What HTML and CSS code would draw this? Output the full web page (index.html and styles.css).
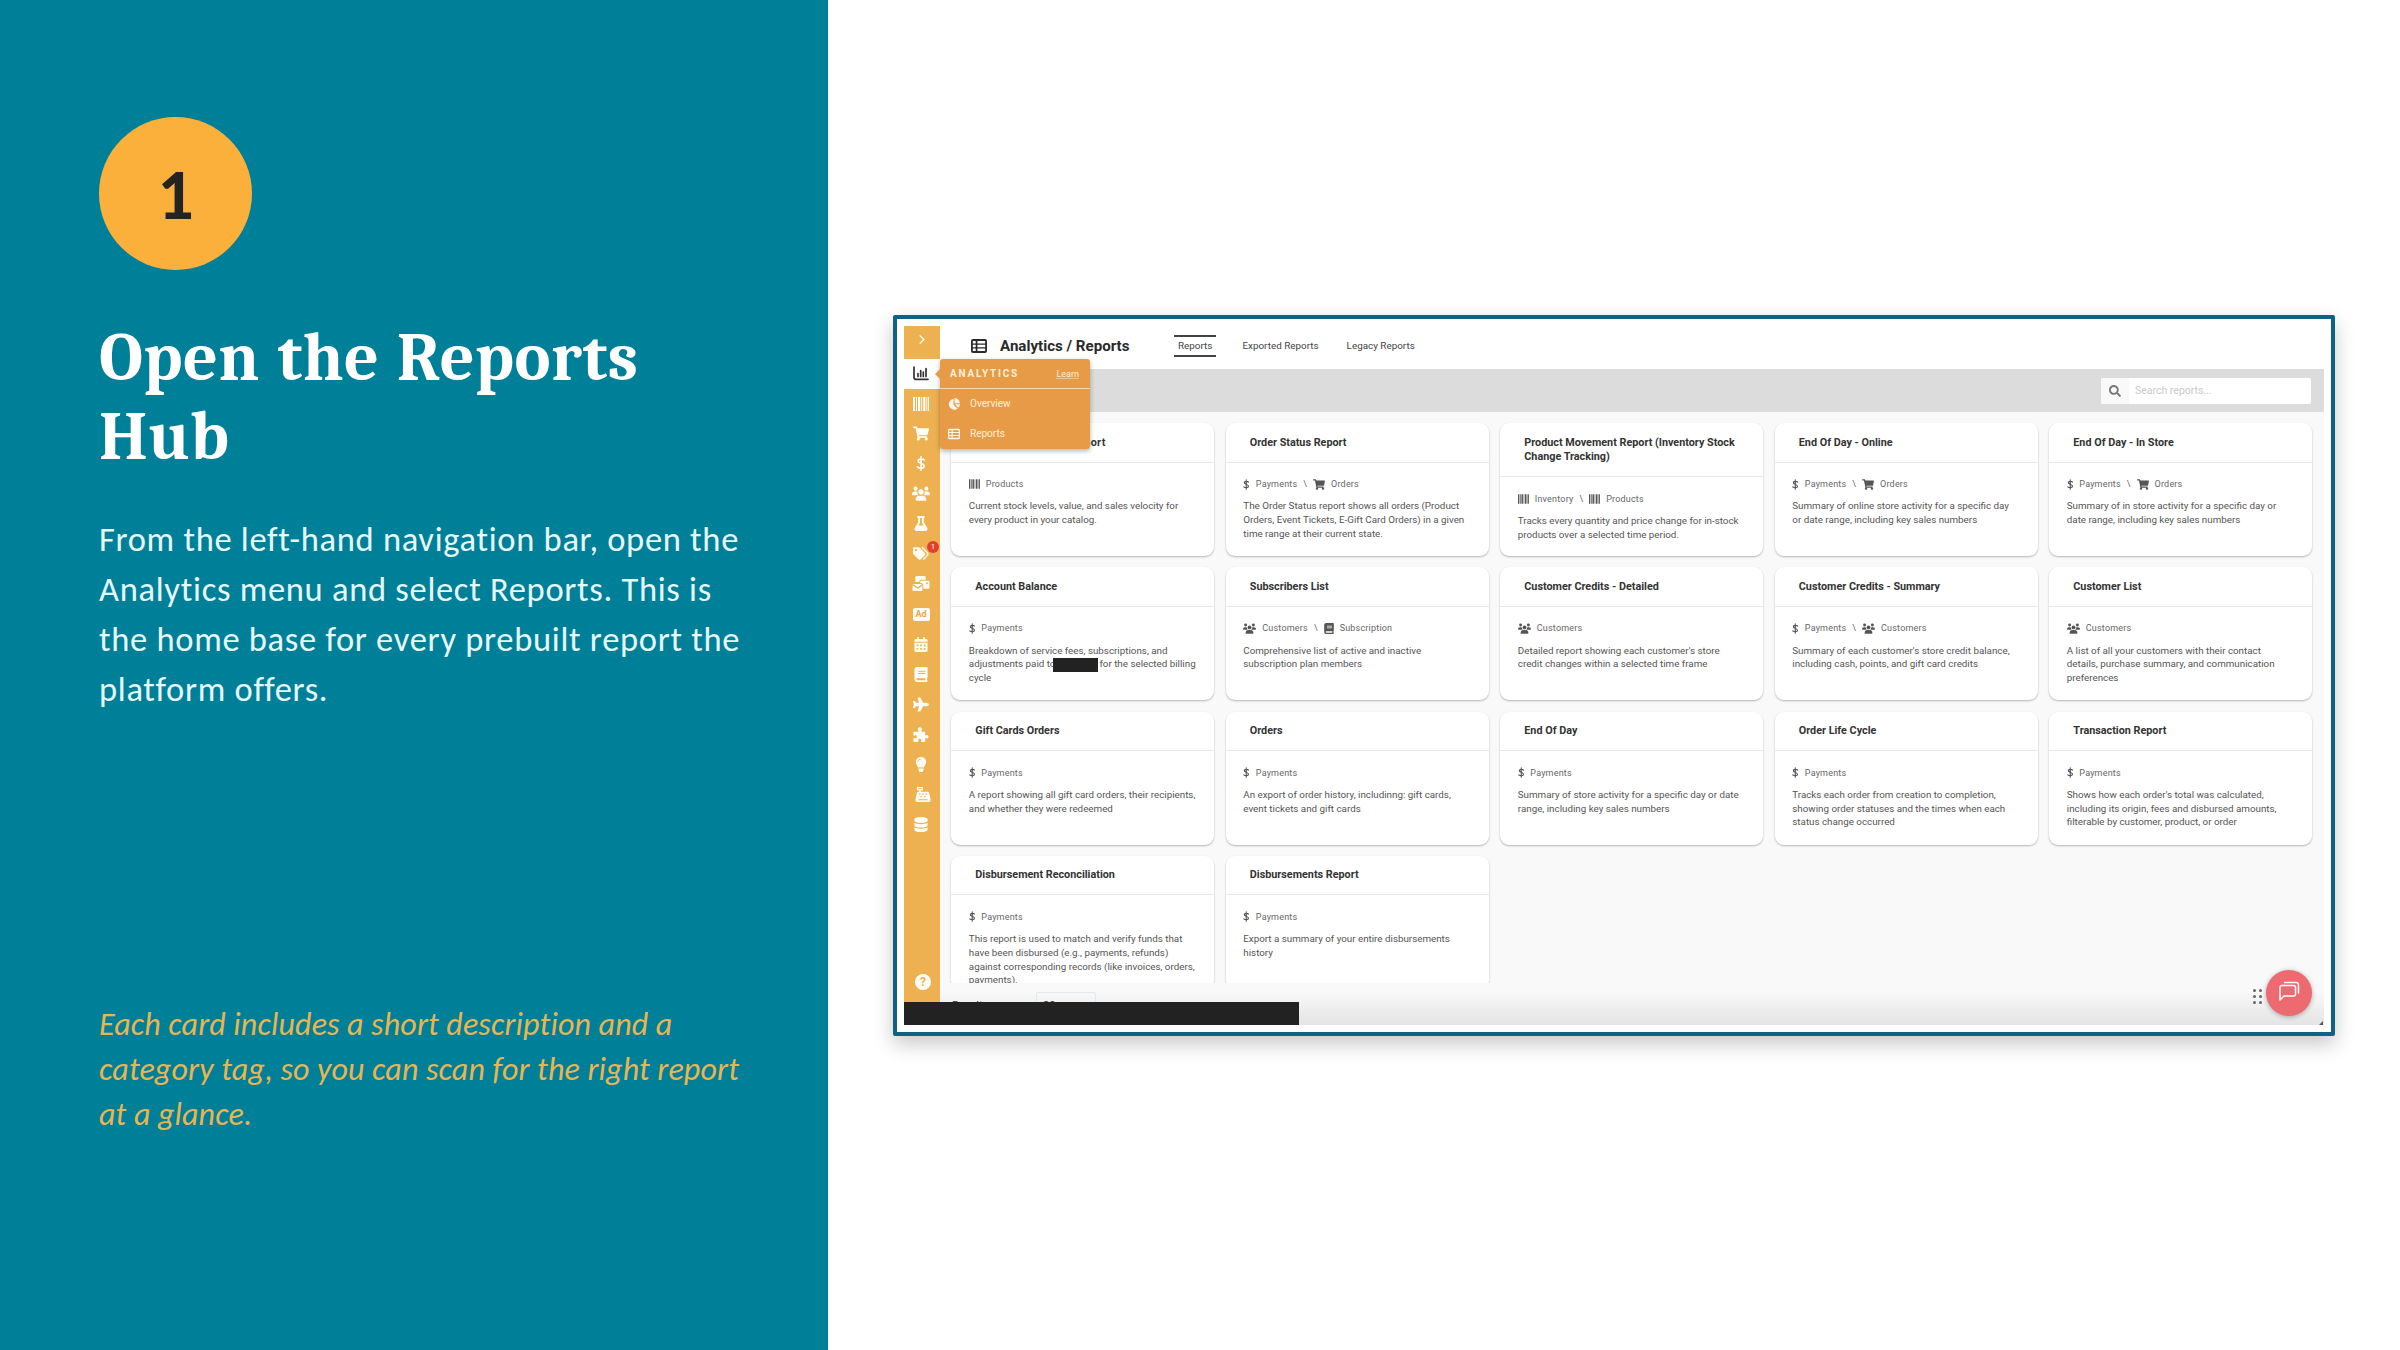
FILE: index.html
```html
<!DOCTYPE html>
<html lang="en">
<head>
  <meta charset="UTF-8" />
  <title>Open the Reports Hub</title>
  <link rel="stylesheet" href="styles.css">
</head>
<body>
  <!-- Icon sprite -->
  <svg class="sprite" xmlns="http://www.w3.org/2000/svg">
    <symbol id="i-table" viewBox="0 0 16 14"><path fill-rule="evenodd" d="M2 0h12a2 2 0 0 1 2 2v10a2 2 0 0 1-2 2H2a2 2 0 0 1-2-2V2a2 2 0 0 1 2-2zM1.8 2v2.4h2.9V2zM6.4 2v2.4h7.8V2zM1.8 5.8v2.4h2.9V5.8zM6.4 5.8v2.4h7.8V5.8zM1.8 9.6V12h2.9V9.6zM6.4 9.6V12h7.8V9.6z"/></symbol>
    <symbol id="i-chart" viewBox="0 0 16 14"><path d="M1 .5v10.300a2 2 0 0 0 2 2h12M5 10V7M7.700 10V4M10.300 10V5.500M13 10V2" fill="none" stroke="currentColor" stroke-width="1.700" stroke-linecap="round"/></symbol>
    <symbol id="i-barcode" viewBox="0 0 16 14"><path d="M0 0h2v14H0zM3 0h1v14H3zM5 0h2.200v14H5zM8.200 0h1v14h-1zM10.200 0h2.200v14h-2.200zM13.200 0h.7v14h-.7zM14.700 0H16v14h-1.300z"/></symbol>
    <symbol id="i-cart" viewBox="0 0 576 512"><path d="M528.12 301.319l47.273-208C578.806 78.301 567.391 64 551.99 64H159.208l-9.166-44.81C147.758 8.021 137.93 0 126.529 0H24C10.745 0 0 10.745 0 24v16c0 13.255 10.745 24 24 24h69.883l70.248 343.435C147.325 417.1 136 435.222 136 456c0 30.928 25.072 56 56 56s56-25.072 56-56c0-15.674-6.447-29.835-16.824-40h209.647C430.447 426.165 424 440.326 424 456c0 30.928 25.072 56 56 56s56-25.072 56-56c0-22.172-12.888-41.332-31.579-50.405l5.517-24.276c3.413-15.018-8.002-29.319-23.403-29.319H218.117l-6.545-32h293.145c11.206 0 20.92-7.754 23.403-18.681z"/></symbol>
    <symbol id="i-dollar" viewBox="0 0 10 16"><path d="M5 .8v14.400M8.600 4.300C7.500 3 2 2.300 2 5.300 2 8.600 8.400 7.200 8.400 10.600c0 3.200-5.500 2.800-7.200 1" fill="none" stroke="currentColor" stroke-width="1.700" stroke-linecap="round"/></symbol>
    <symbol id="i-users" viewBox="0 0 20 16"><circle cx="4" cy="2.600" r="2.300"/><circle cx="16" cy="2.600" r="2.300"/><circle cx="10" cy="6.300" r="2.900"/><path d="M0 9.200C0 7 1.200 5.900 3 5.900h2.300c.7 0 .8.600.8 1.300 0 1.200.4 2 1.100 2.700H.6C.2 9.900 0 9.600 0 9.200zM20 9.200c0-2.200-1.200-3.300-3-3.300h-2.300c-.7 0-.8.600-.8 1.300 0 1.200-.4 2-1.100 2.700h6.600c.4 0 .6-.3.600-.7zM4 15.200c0-3 1.500-4.800 4-4.800h4c2.500 0 4 1.800 4 4.800 0 .5-.3.800-.7.800H4.700c-.4 0-.7-.3-.7-.8z"/></symbol>
    <symbol id="i-flask" viewBox="0 0 448 512"><path d="M437.2 403.5L320 215V64h8c13.300 0 24-10.700 24-24V24c0-13.300-10.700-24-24-24H120c-13.300 0-24 10.700-24 24v16c0 13.300 10.700 24 24 24h8v151L10.800 403.500C-18.500 450.600 15.300 512 70.900 512h306.200c55.700 0 89.400-61.500 60.100-108.500zM137.900 320l48.200-77.600c3.700-5.200 5.800-11.600 5.800-18.400V64h64v160c0 6.900 2.200 13.200 5.800 18.400l48.200 77.600h-172z"/></symbol>
    <symbol id="i-tags" viewBox="0 0 18 15"><path fill-rule="evenodd" d="M0 1.500V7c0 .6.200 1 .6 1.400l5.600 5.600c.8.800 2 .8 2.700 0l4.400-4.500c.8-.8.800-2 0-2.700L7.600 1C7.200.6 6.700.4 6.200.4H1.300C.5.400 0 .8 0 1.500zm3.300 3.400a1.300 1.300 0 1 1 0-2.600 1.300 1.300 0 0 1 0 2.600z"/><path d="M10.500.8l5.600 5.800c.9.900.9 2 0 3L12 13.900" fill="none" stroke="currentColor" stroke-width="1.500" stroke-linecap="round"/></symbol>
    <symbol id="i-mail" viewBox="0 0 18 16"><path d="M3 1.200C3 .5 3.500 0 4.200 0h8.600c.7 0 1.200.5 1.200 1.200V4H9.500C8 4 7 5 7 6.500H3z"/><path fill-rule="evenodd" d="M9.200 5H17c.6 0 1 .4 1 1v6.500c0 .6-.4 1-1 1h-5.500V10c0-1.500-.9-2.500-2.400-2.500H8.200V6c0-.6.4-1 1-1zm5.300 2v1.800h1.800V7z"/><path d="M0 8.600h10.500L5.800 12 0 8.600zM0 10.100l5.300 3.200c.3.200.7.200 1 0l4.200-3.200v5c0 .6-.4.900-.9.900H.9c-.5 0-.9-.3-.9-.9z"/></symbol>
    <symbol id="i-calendar" viewBox="0 0 14 16"><path fill-rule="evenodd" d="M3 0h1.600v2h4.800V0H11v2h1.500c.8 0 1.500.7 1.500 1.500V5H0V3.500C0 2.700.7 2 1.500 2H3zM0 6h14v8.500c0 .8-.7 1.500-1.500 1.500h-11C.7 16 0 15.300 0 14.500zM2.300 8v1.800h1.800V8zM6.100 8v1.800h1.800V8zM9.900 8v1.800h1.800V8zM2.300 11.800v1.800h1.800v-1.800zM6.100 11.800v1.800h1.800v-1.800zM9.900 11.800v1.800h1.800v-1.800z"/></symbol>
    <symbol id="i-book" viewBox="0 0 14 16"><path fill-rule="evenodd" d="M3 0h10c.6 0 1 .4 1 1v10c0 .4-.2.700-.5.900v2c.3.100.5.400.5.700v.4c0 .6-.4 1-1 1H3c-1.700 0-3-1.300-3-3V3c0-1.700 1.300-3 3-3zm1 4v1h7.500V4zM4 6.500v1h7.500v-1zM3 12c-1.300 0-1.300 2 0 2h8.800v-2z"/></symbol>
    <symbol id="i-plane" viewBox="0 0 576 512"><path d="M480 192H365.71L260.61 8.06A16.014 16.014 0 0 0 246.71 0h-65.5c-10.63 0-18.3 10.17-15.38 20.39L214.86 192H112l-43.2-57.6c-3.02-4.03-7.77-6.4-12.8-6.4H16.01C5.6 128-2.04 137.78.49 147.88L32 256 .49 364.12C-2.04 374.22 5.6 384 16.01 384H56c5.04 0 9.78-2.37 12.8-6.4L112 320h102.86l-49.03 171.6c-2.92 10.22 4.75 20.4 15.38 20.4h65.5c5.74 0 11.04-3.08 13.89-8.06L365.71 320H480c35.35 0 96-28.65 96-64s-60.65-64-96-64z"/></symbol>
    <symbol id="i-puzzle" viewBox="0 0 16 16"><path d="M0 5h4.800c.9 0 .6-.8.3-1.300C4 2 5 .2 6.800.2S9.600 2 8.600 3.700C8.200 4.400 8.200 5 9 5h3.500v3.300c0 .9.700 1 1.300.5 1-.7 2.200 0 2.200 1.600s-1.200 2.300-2.200 1.600c-.6-.5-1.300-.4-1.300.5V16H8.700c-.8 0-.9-.7-.5-1.300.7-1.100 0-2.200-1.500-2.200s-2.200 1.100-1.500 2.200c.4.600.3 1.300-.5 1.300H0v-3.800c0-.9.700-.9 1.300-.5 1.200.7 2.300.1 2.300-1.300S2.500 8.500 1.300 9.200C.7 9.600 0 9.600 0 8.700z"/></symbol>
    <symbol id="i-bulb" viewBox="0 0 12 16"><path fill-rule="evenodd" d="M6 0c3.200 0 5.500 2.400 5.500 5.400 0 2.400-1.700 3.800-2.500 5.900H3C2.200 9.200.5 7.800.5 5.400.5 2.400 2.800 0 6 0zM3 5.300c0-1.500 1.200-2.600 2.800-2.700v-.8C3.700 1.900 2.200 3.300 2.200 5.300zM3.200 12.300h5.600v1.400L7.700 16H4.300l-1.100-2.300z"/></symbol>
    <symbol id="i-register" viewBox="0 0 16 16"><path fill-rule="evenodd" d="M1.500 0H8v3.500H5.700V5H13c.8 0 1.400.5 1.500 1.300l1.500 6.200v2c0 .9-.6 1.500-1.500 1.500h-13C.6 16 0 15.400 0 14.500v-2l1.500-6.200C1.700 5.500 2.200 5 3 5h.8V3.500H1.500zm1.300 1.200v1h4v-1zM3.800 7v1.300h1.500V7zM7.200 7v1.300h1.500V7zM10.600 7v1.300h1.500V7zM5.400 9.500v1.300h1.500V9.500zM9 9.500v1.300h1.500V9.500zM3 13v1.200h10V13z"/></symbol>
    <symbol id="i-db" viewBox="0 0 14 16"><path d="M0 2.500C0 1.100 3 0 7 0s7 1.100 7 2.500V4c0 1.300-3 2.400-7 2.400S0 5.300 0 4zM0 6.200C1.600 7.300 4.300 7.700 7 7.700s5.400-.4 7-1.500v2.500c0 1.400-3 2.500-7 2.500S0 10.100 0 8.700zM0 11c1.600 1.100 4.300 1.500 7 1.500s5.400-.4 7-1.500v2.500C14 14.900 11 16 7 16s-7-1.100-7-2.500z"/></symbol>
    <symbol id="i-pie" viewBox="0 0 16 16"><path d="M7.400 1v8l5.500 5.300A7.400 7.400 0 1 1 7.400 1zM8.800 0a7.200 7.200 0 0 1 7 7h-7zM9.300 8.400H16a7 7 0 0 1-2.300 4.600z"/></symbol>
    <symbol id="i-search" viewBox="0 0 512 512"><path d="M505 442.7L405.3 343c-4.5-4.5-10.6-7-17-7H372c27.6-35.3 44-79.7 44-128C416 93.1 322.9 0 208 0S0 93.1 0 208s93.1 208 208 208c48.3 0 92.7-16.4 128-44v16.3c0 6.4 2.5 12.5 7 17l99.7 99.7c9.4 9.4 24.6 9.4 33.9 0l28.3-28.3c9.4-9.4 9.4-24.6.1-34zM208 336c-70.7 0-128-57.2-128-128 0-70.7 57.2-128 128-128 70.7 0 128 57.2 128 128 0 70.7-57.2 128-128 128z"/></symbol>
    <symbol id="i-chat" viewBox="0 0 22 22"><path d="M2 19V6.500a2 2 0 0 1 2-2h11.500a2 2 0 0 1 2 2V13a2 2 0 0 1-2 2H6zM6.500 1.500H18a2.500 2.500 0 0 1 2.500 2.500v8" fill="none" stroke="currentColor" stroke-width="1.500" stroke-linecap="round" stroke-linejoin="round"/></symbol>
  </svg>

  <div class="slide">
    <!-- Left panel: step description -->
    <div class="panel">
      <div class="step">1</div>
      <h1>Open the Reports<br>Hub</h1>
      <p class="lead">From the left-hand navigation bar, open the<br>Analytics menu and select Reports. This is<br>the home base for every prebuilt report the<br>platform offers.</p>
      <p class="note">Each card includes a short description and a<br>category tag, so you can scan for the right report<br>at a glance.</p>
    </div>

    <!-- Right side: app window -->
    <div class="stage">
      <div class="frame">
        <div class="app">
          <nav class="sidebar">
            <div class="toggle"><svg viewBox="0 0 8 12"><path d="M1.500 1.500L6 6l-4.500 4.500" fill="none" stroke="currentColor" stroke-width="1.500"/></svg></div>
            <div class="item active"><svg><use href="#i-chart"/></svg></div>
            <div class="item"><svg class="barcode"><use href="#i-barcode"/></svg></div>
            <div class="item"><svg><use href="#i-cart"/></svg></div>
            <div class="item"><svg><use href="#i-dollar"/></svg></div>
            <div class="item"><svg class="wide"><use href="#i-users"/></svg></div>
            <div class="item"><svg><use href="#i-flask"/></svg></div>
            <div class="item"><svg><use href="#i-tags"/></svg><span class="badge">1</span></div>
            <div class="item"><svg class="wide"><use href="#i-mail"/></svg></div>
            <div class="item"><span class="ad">Ad</span></div>
            <div class="item"><svg><use href="#i-calendar"/></svg></div>
            <div class="item"><svg><use href="#i-book"/></svg></div>
            <div class="item"><svg><use href="#i-plane"/></svg></div>
            <div class="item"><svg><use href="#i-puzzle"/></svg></div>
            <div class="item"><svg><use href="#i-bulb"/></svg></div>
            <div class="item shift"><svg><use href="#i-register"/></svg></div>
            <div class="item"><svg><use href="#i-db"/></svg></div>
            <div class="help">?</div>
          </nav>

          <div class="main">
            <header class="topbar">
              <svg class="title-icon"><use href="#i-table"/></svg>
              <div class="title">Analytics / Reports</div>
              <div class="tabs">
                <a class="tab current">Reports</a>
                <a class="tab">Exported Reports</a>
                <a class="tab">Legacy Reports</a>
              </div>
            </header>
            <div class="filter">
              <div class="search">
                <div class="search-icon"><svg><use href="#i-search"/></svg></div>
                <div class="search-text">Search reports...</div>
              </div>
            </div>

            <div class="cards">
              <div class="card">
                <h3 class="spaced">Product Inventory Report</h3>
                <div class="tags"><svg class="t-bar"><use href="#i-barcode"/></svg><span>Products</span></div>
                <p>Current stock levels, value, and sales velocity for<br>every product in your catalog.</p>
              </div>
              <div class="card">
                <h3>Order Status Report</h3>
                <div class="tags"><svg class="t-usd"><use href="#i-dollar"/></svg><span>Payments</span><i>\</i><svg class="t-cart"><use href="#i-cart"/></svg><span>Orders</span></div>
                <p>The Order Status report shows all orders (Product<br>Orders, Event Tickets, E-Gift Card Orders) in a given<br>time range at their current state.</p>
              </div>
              <div class="card">
                <h3>Product Movement Report (Inventory Stock Change Tracking)</h3>
                <div class="tags"><svg class="t-bar"><use href="#i-barcode"/></svg><span>Inventory</span><i>\</i><svg class="t-bar"><use href="#i-barcode"/></svg><span>Products</span></div>
                <p>Tracks every quantity and price change for in-stock<br>products over a selected time period.</p>
              </div>
              <div class="card">
                <h3>End Of Day - Online</h3>
                <div class="tags"><svg class="t-usd"><use href="#i-dollar"/></svg><span>Payments</span><i>\</i><svg class="t-cart"><use href="#i-cart"/></svg><span>Orders</span></div>
                <p>Summary of online store activity for a specific day<br>or date range, including key sales numbers</p>
              </div>
              <div class="card">
                <h3>End Of Day - In Store</h3>
                <div class="tags"><svg class="t-usd"><use href="#i-dollar"/></svg><span>Payments</span><i>\</i><svg class="t-cart"><use href="#i-cart"/></svg><span>Orders</span></div>
                <p>Summary of in store activity for a specific day or<br>date range, including key sales numbers</p>
              </div>

              <div class="card">
                <h3>Account Balance</h3>
                <div class="tags"><svg class="t-usd"><use href="#i-dollar"/></svg><span>Payments</span></div>
                <p>Breakdown of service fees, subscriptions, and<br>adjustments paid to<span class="redact"></span>for the selected billing<br>cycle</p>
              </div>
              <div class="card">
                <h3>Subscribers List</h3>
                <div class="tags"><svg class="t-usr"><use href="#i-users"/></svg><span>Customers</span><i>\</i><svg class="t-book"><use href="#i-book"/></svg><span>Subscription</span></div>
                <p>Comprehensive list of active and inactive<br>subscription plan members</p>
              </div>
              <div class="card">
                <h3>Customer Credits - Detailed</h3>
                <div class="tags"><svg class="t-usr"><use href="#i-users"/></svg><span>Customers</span></div>
                <p>Detailed report showing each customer's store<br>credit changes within a selected time frame</p>
              </div>
              <div class="card">
                <h3>Customer Credits - Summary</h3>
                <div class="tags"><svg class="t-usd"><use href="#i-dollar"/></svg><span>Payments</span><i>\</i><svg class="t-usr"><use href="#i-users"/></svg><span>Customers</span></div>
                <p>Summary of each customer's store credit balance,<br>including cash, points, and gift card credits</p>
              </div>
              <div class="card">
                <h3>Customer List</h3>
                <div class="tags"><svg class="t-usr"><use href="#i-users"/></svg><span>Customers</span></div>
                <p>A list of all your customers with their contact<br>details, purchase summary, and communication<br>preferences</p>
              </div>

              <div class="card">
                <h3>Gift Cards Orders</h3>
                <div class="tags"><svg class="t-usd"><use href="#i-dollar"/></svg><span>Payments</span></div>
                <p>A report showing all gift card orders, their recipients,<br>and whether they were redeemed</p>
              </div>
              <div class="card">
                <h3>Orders</h3>
                <div class="tags"><svg class="t-usd"><use href="#i-dollar"/></svg><span>Payments</span></div>
                <p>An export of order history, includinng: gift cards,<br>event tickets and gift cards</p>
              </div>
              <div class="card">
                <h3>End Of Day</h3>
                <div class="tags"><svg class="t-usd"><use href="#i-dollar"/></svg><span>Payments</span></div>
                <p>Summary of store activity for a specific day or date<br>range, including key sales numbers</p>
              </div>
              <div class="card">
                <h3>Order Life Cycle</h3>
                <div class="tags"><svg class="t-usd"><use href="#i-dollar"/></svg><span>Payments</span></div>
                <p>Tracks each order from creation to completion,<br>showing order statuses and the times when each<br>status change occurred</p>
              </div>
              <div class="card">
                <h3>Transaction Report</h3>
                <div class="tags"><svg class="t-usd"><use href="#i-dollar"/></svg><span>Payments</span></div>
                <p>Shows how each order's total was calculated,<br>including its origin, fees and disbursed amounts,<br>filterable by customer, product, or order</p>
              </div>

              <div class="card">
                <h3>Disbursement Reconciliation</h3>
                <div class="tags"><svg class="t-usd"><use href="#i-dollar"/></svg><span>Payments</span></div>
                <p>This report is used to match and verify funds that<br>have been disbursed (e.g., payments, refunds)<br>against corresponding records (like invoices, orders,<br>payments).</p>
              </div>
              <div class="card">
                <h3>Disbursements Report</h3>
                <div class="tags"><svg class="t-usd"><use href="#i-dollar"/></svg><span>Payments</span></div>
                <p>Export a summary of your entire disbursements<br>history</p>
              </div>
            </div>

            <footer class="pager">
              <span>Results per page</span>
              <span class="select">20</span>
            </footer>
          </div>

          <!-- Analytics flyout menu -->
          <div class="flyout">
            <div class="flyout-head"><b>ANALYTICS</b><a>Learn</a></div>
            <div class="flyout-row"><svg><use href="#i-pie"/></svg><span>Overview</span></div>
            <div class="flyout-row"><svg><use href="#i-table"/></svg><span>Reports</span></div>
          </div>

          <div class="blackbar"></div>
          <div class="drag"><i></i><i></i><i></i><i></i><i></i><i></i></div>
          <div class="chat"><svg><use href="#i-chat"/></svg></div>
          <div class="corner"></div>
        </div>
      </div>
    </div>
  </div>
</body>
</html>
```
FILE: styles.css
```css
* { box-sizing: border-box; }
body {
  margin: 0;
  width: 2400px;
  height: 1350px;
  overflow: hidden;
  background: #fff;
  font-family: Roboto, "Liberation Sans", sans-serif;
}
svg { fill: currentColor; display: block; flex-shrink: 0; }
.sprite { position: absolute; width: 0; height: 0; }
.slide {
  display: flex;
  height: 1350px;
}

/* left panel */
.panel {
  width: 828px;
  background: #007f99;
  padding: 117px 0 0 99px;
  font-family: Carlito, Lato, sans-serif;
  white-space: nowrap;
}
.step {
  width: 153px;
  height: 153px;
  border-radius: 50%;
  background: #fbb03b;
  color: #232323;
  font-size: 72px;
  font-weight: bold;
  line-height: 155px;
  text-align: center;
}
h1 {
  margin: 49px 0 0;
  font-family: Caladea, "Noto Serif", "Liberation Serif", serif;
  font-size: 68px;
  line-height: 79px;
  font-weight: bold;
  letter-spacing: 0.500px;
  word-spacing: 2px;
  color: #fff;
}
.lead {
  margin: 38px 0 0;
  font-size: 34.500px;
  line-height: 49.900px;
  letter-spacing: 0.700px;
  color: #e6f8fa;
}
.note {
  margin: 287px 0 0;
  font-size: 32px;
  line-height: 45.300px;
  letter-spacing: 0.160px;
  font-style: italic;
  color: #e9b551;
}

/* framed app window */
.stage {
  flex: 1;
  padding: 315px 0 0 65px;
}
.frame {
  width: 1442px;
  height: 721px;
  border: 4px solid #0f6282;
  border-radius: 2px;
  padding: 7px;
  background: #fff;
  box-shadow: 0 8px 20px rgba(0,0,0,0.22);
}
.app {
  position: relative;
  display: flex;
  width: 1420px;
  height: 699px;
  overflow: hidden;
}
.sidebar {
  display: flex;
  flex-direction: column;
  align-items: stretch;
  width: 36px;
  background: #edb152;
  color: #fffdf5;
}
.toggle {
  display: flex;
  align-items: center;
  justify-content: center;
  height: 32.500px;
  padding-bottom: 5px;
}
.toggle svg { width: 8px; height: 11px; }
.item {
  position: relative;
  display: flex;
  align-items: center;
  justify-content: center;
  height: 30.070px;
  padding: 0 2px 0 0;
}
.item svg { width: 16px; height: 15px; }
.item svg.wide { width: 18px; height: 15px; }
.item svg.barcode { height: 14px; }
.item.shift { padding: 0; left: 1px; }
.item.active { background: #fff; color: #333; }
.badge {
  position: absolute;
  left: 23px;
  top: 2px;
  width: 12px;
  height: 12px;
  border-radius: 50%;
  background: #e2402c;
  color: #fff;
  font-size: 7px;
  line-height: 12px;
  text-align: center;
}
.ad {
  width: 17px;
  height: 13px;
  border-radius: 2px;
  background: #fffdf5;
  color: #e2a94f;
  font-size: 9px;
  line-height: 13px;
  font-weight: bold;
  text-align: center;
}
.help {
  margin: 134px 0 0 11px;
  width: 16px;
  height: 16px;
  border-radius: 50%;
  background: #fffdf5;
  color: #edb152;
  font-size: 12px;
  line-height: 16px;
  font-weight: bold;
  text-align: center;
}

.main {
  width: 1384px;
  display: flex;
  flex-direction: column;
  background: #f9f9f9;
}
.topbar {
  display: flex;
  align-items: center;
  height: 43px;
  padding: 0 0 3px 31px;
  background: #fff;
  color: #2a2a2a;
}
.title-icon { width: 16px; height: 14px; }
.title {
  width: 174px;
  margin-left: 13px;
  font-size: 15.100px;
  font-weight: bold;
}
.tabs { display: flex; gap: 24px; }
.tab {
  font-size: 9.900px;
  line-height: 18px;
  padding: 2px 2px;
  color: #444;
}
.tab.current {
  padding: 0 4px;
  border-top: 2px solid #444;
  border-bottom: 2px solid #444;
}
.filter {
  display: flex;
  justify-content: flex-end;
  align-items: center;
  height: 43px;
  padding-right: 13px;
  background: #dcdcdc;
}
.search {
  display: flex;
  width: 210px;
  height: 26px;
  border-radius: 2px;
  background: #fff;
  overflow: hidden;
}
.search-icon {
  display: flex;
  align-items: center;
  justify-content: center;
  width: 28px;
  background: #f9f9f9;
  color: #777;
}
.search-icon svg { width: 12px; height: 12px; }
.search-text {
  padding-left: 6px;
  font-size: 10.500px;
  line-height: 26px;
  color: #c9c9c9;
}

/* report cards */
.cards {
  display: grid;
  grid-template-columns: repeat(5, 263px);
  grid-auto-rows: 133px;
  gap: 11.300px 11.500px;
  height: 571px;
  padding: 11px 0 0 11.300px;
  overflow: hidden;
}
.card {
  border-radius: 9px;
  background: #fff;
  box-shadow: 0 1px 2px rgba(0,0,0,0.28);
}
.card h3 {
  margin: 0;
  padding: 12.500px 14px 11.500px 24px;
  border-bottom: 1px solid #e8e8e8;
  font-size: 10.800px;
  line-height: 14.600px;
  font-weight: bold;
  color: #333;
}
.card h3.spaced { letter-spacing: 0.350px; }
.tags {
  display: flex;
  align-items: center;
  height: 13px;
  margin: 15px 0 0 17.500px;
  font-size: 9px;
  color: #666;
}
.tags span { margin-left: 6px; letter-spacing: 0.200px; }
.tags i { margin: 0 6px; font-style: normal; }
.tags svg { color: #555; }
.t-usd { width: 6.500px; height: 11px; }
.t-bar { width: 11px; height: 10px; }
.t-cart { width: 12px; height: 11px; }
.t-usr { width: 13px; height: 11px; }
.t-book { width: 10px; height: 11px; }
.card p {
  margin: 8.700px 0 0 17.500px;
  font-size: 9.800px;
  line-height: 13.700px;
  color: #555;
  white-space: nowrap;
}
.redact {
  display: inline-block;
  width: 45px;
  height: 14px;
  margin: -4px 1px -4px -2px;
  background: #222;
  vertical-align: -1px;
}
.pager {
  display: flex;
  flex: 1;
  align-items: flex-start;
  padding: 9px 0 0 12px;
  font-size: 11px;
  color: #333;
  background: linear-gradient(#f9f9f9 20%, #e4e4e4);
}
.pager span:first-child { width: 84px; padding-top: 7px; line-height: 13px; }
.select {
  width: 60px;
  height: 28px;
  padding: 6px 6px;
  line-height: 13px;
  border: 1px solid #dfe9ee;
  border-radius: 2px;
}

/* flyout */
.flyout {
  position: absolute;
  left: 36px;
  top: 33px;
  width: 150px;
  height: 90px;
  border-radius: 3px;
  background: #e89b46;
  color: #fff0dc;
  font-size: 10px;
  box-shadow: 0 2px 5px rgba(0,0,0,0.3);
}
.flyout::before {
  content: "";
  position: absolute;
  left: -5px;
  top: 10px;
  border: 5px solid transparent;
  border-left: 0;
  border-right-color: #e89b46;
}
.flyout-head {
  display: flex;
  justify-content: space-between;
  align-items: center;
  height: 30px;
  padding: 0 11px 0 10px;
  border-bottom: 1px solid #f7d9b4;
}
.flyout-head b { letter-spacing: 1.800px; }
.flyout-head a {
  font-size: 9px;
  text-decoration: underline;
  text-decoration-color: rgba(255,240,220,0.5);
}
.flyout-row {
  display: flex;
  align-items: center;
  height: 30px;
  padding: 0 0 1px 8px;
}
.flyout-row svg { width: 12px; height: 12px; margin-right: 10px; color: #fff7ea; }

.blackbar {
  position: absolute;
  left: 0;
  bottom: 0;
  width: 395px;
  height: 23px;
  background: #222;
}
.drag {
  position: absolute;
  right: 62px;
  top: 663px;
  display: grid;
  grid-template-columns: 3px 3px;
  gap: 3px;
}
.drag i { width: 3px; height: 3px; border-radius: 50%; background: #666; }
.chat {
  position: absolute;
  left: 1362px;
  top: 644px;
  width: 46px;
  height: 46px;
  border-radius: 50%;
  background: #ec6a70;
  color: #fff;
  box-shadow: 0 1px 5px rgba(0,0,0,0.3);
}
.chat svg { width: 22px; height: 22px; margin: 11px 0 0 12px; }
.corner {
  position: absolute;
  right: 1px;
  bottom: 0;
  border: 2px solid transparent;
  border-right-color: #555;
  border-bottom-color: #555;
}
```
